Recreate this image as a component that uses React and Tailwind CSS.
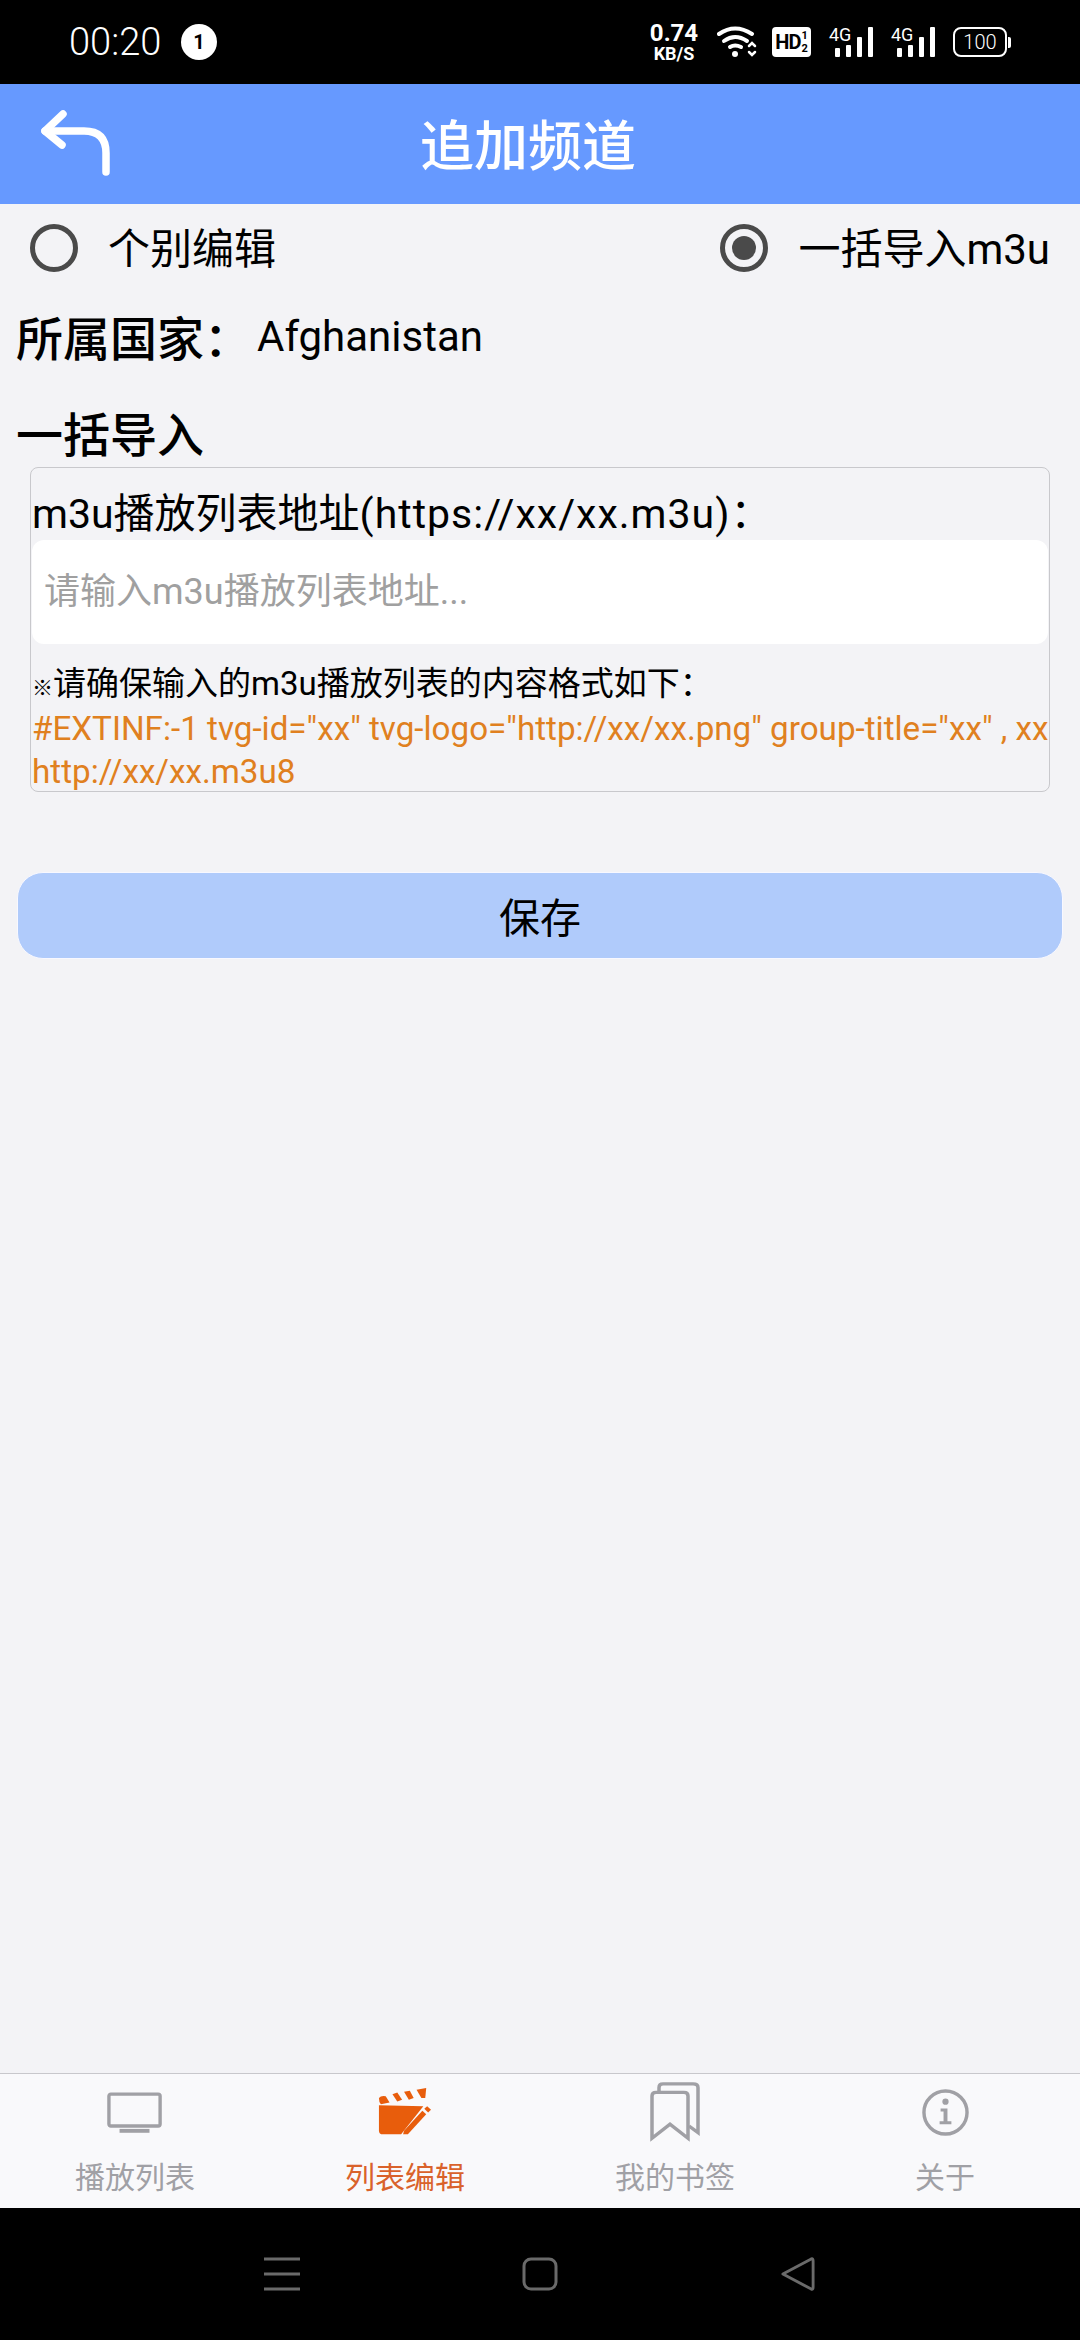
import React from 'react';

const BODY_FONT = 'font-["Roboto","Noto_Sans_CJK_SC",sans-serif]';

function Signal() {
  return (
    <div className="relative w-[44px] h-[30px]">
      <span className="absolute left-0 top-[-1px] text-[18px] leading-[18px] text-white">4G</span>
      <svg width="44" height="30" viewBox="0 0 44 30" className="absolute left-0 top-0" fill="#fff">
        <rect x="6" y="21" width="5" height="9" rx="1" />
        <rect x="17" y="18" width="5" height="12" rx="1" />
        <rect x="28" y="10" width="5" height="20" rx="1" />
        <rect x="39" y="0" width="5" height="30" rx="1" />
      </svg>
    </div>
  );
}

function StatusBar() {
  return (
    <div className="h-[84px] bg-black flex items-center pl-[69px] shrink-0 text-white">
      <span className="w-[94px] text-[38px] leading-[44px] font-light">00:20</span>
      <span className="ml-[18px] w-[36px] h-[36px] rounded-full bg-white text-black flex items-center justify-center text-[20px] font-bold">1</span>
      <div className="ml-[432px] w-[50px] flex flex-col items-center">
        <span className="text-[24px] leading-[24px] font-bold">0.74</span>
        <span className="text-[18px] leading-[18px] font-bold">KB/S</span>
      </div>
      <svg width="40" height="32" viewBox="0 0 40 32" className="ml-[18px]" fill="none" stroke="#fff" strokeWidth="4" strokeLinecap="round">
        <path d="M2 8 Q18 -3 35 8" />
        <path d="M7 15 Q18 7 30 15" />
        <path d="M13 21 Q18 18 24 21" />
        <circle cx="18" cy="28" r="3" fill="#fff" stroke="none" />
        <path d="M32 20 l3 -3 l3 3 M32 26 l3 3 l3 -3" strokeWidth="2.5" />
      </svg>
      <div className="ml-[15px] w-[39px] h-[30px] rounded-[4px] bg-white text-black flex items-center justify-center gap-[1px] font-bold">
        <span className="text-[20px] leading-[30px] tracking-[-1px]">HD</span>
        <span className="flex flex-col text-[11px] leading-[13px]"><span>1</span><span>2</span></span>
      </div>
      <div className="ml-[18px] flex gap-[18px]">
        <Signal />
        <Signal />
      </div>
      <div className="ml-[18px] flex items-center">
        <div className="w-[54px] h-[30px] rounded-[8px] border-[2.5px] border-white flex items-center justify-center text-[20px] leading-[24px] font-light">100</div>
        <span className="ml-[1px] w-[3px] h-[11px] bg-white rounded-r-[2px]"></span>
      </div>
    </div>
  );
}

function Header() {
  return (
    <div className="h-[120px] bg-[#6699ff] flex items-center pl-[40px] shrink-0">
      <svg width="72" height="68" viewBox="0 0 72 68" fill="none" stroke="#fff" strokeWidth="7.5" strokeLinecap="round" strokeLinejoin="round">
        <path d="M23 4 L5 21 L22 35" />
        <path d="M5 21 H44 Q66 21 66 43 V62" />
      </svg>
      <span className="ml-[308px] mt-[8px] text-[54px] leading-[64px] font-medium text-white">追加频道</span>
    </div>
  );
}

function Radio({ checked, label }) {
  return (
    <div className="flex items-center">
      <span className="w-[48px] h-[48px] rounded-full border-[5px] border-[#4a4a4a] flex items-center justify-center">
        {checked && <span className="w-[24px] h-[24px] rounded-full bg-[#4a4a4a]"></span>}
      </span>
      <span className="ml-[30px] mt-[3px] text-[42px] leading-[50px] text-black">{label}</span>
    </div>
  );
}

function TabIcon({ name }) {
  if (name === 'tv') {
    return (
      <svg width="56" height="41" viewBox="0 0 58 42" fill="none">
        <rect x="2" y="2" width="53" height="33" rx="2" stroke="#a0a0a5" strokeWidth="3.5" />
        <rect x="13" y="38" width="31" height="4" fill="#a0a0a5" />
      </svg>
    );
  }
  if (name === 'clap') {
    return (
      <svg width="54" height="49" viewBox="0 0 56 54" preserveAspectRatio="none" fill="#e85d0c">
        <path d="M1 19 L47 20 L24 51 H5 Q1 51 1 47 Z" />
        <path d="M1 11 Q3 8 8 9 L12 16 L3 18 Q1 16 1 11 Z" />
        <path d="M15 7 L20 5 L25 13 L20 15 Z" />
        <path d="M27 4 L33 3 L37 11 L32 13 Z" />
        <path d="M40 2 L50 0 L49 11 L45 11 Z" />
        <path d="M31 51 L26 51 L27 47 L46 25 L50 29 Z" />
        <path d="M48 23 L51 20 L55 24 L52 27 Z" />
      </svg>
    );
  }
  if (name === 'bookmark') {
    return (
      <svg width="50" height="60" viewBox="0 0 50 64" preserveAspectRatio="none" fill="none" stroke="#a0a0a5" strokeWidth="3.5">
        <path d="M9 10 V6 Q9 2 13 2 H43 Q48 2 48 6 V54 L39 47" />
        <path d="M2 60 V15 Q2 11 6 11 H34 Q38 11 38 15 V60 L20 45 Z" />
      </svg>
    );
  }
  return (
    <svg width="47" height="47" viewBox="0 0 48 48" fill="none">
      <circle cx="24" cy="24" r="22" stroke="#a0a0a5" strokeWidth="3.5" />
      <circle cx="24" cy="13" r="3.2" fill="#a0a0a5" />
      <path d="M19 20 H26 V33 H30 V36 H18 V33 H22 V23 H19 Z" fill="#a0a0a5" />
    </svg>
  );
}

function Tab({ icon, label, active }) {
  return (
    <div className="flex-1 flex flex-col items-center">
      <div className="h-[76px] flex items-center justify-center">
        <TabIcon name={icon} />
      </div>
      <span className={`mt-[6px] text-[30px] leading-[44px] ${active ? 'text-[#d9622b]' : 'text-[#a0a0a5]'}`}>{label}</span>
    </div>
  );
}

export default function App() {
  return (
    <div className={`w-[1080px] h-[2340px] flex flex-col bg-[#f3f3f6] ${BODY_FONT}`}>
      <StatusBar />
      <Header />

      <div className="flex-1 flex flex-col">
        <div className="h-[88px] flex items-center justify-between px-[30px]">
          <Radio label="个别编辑" />
          <Radio checked label="一括导入m3u" />
        </div>

        <div className="h-[90px] flex items-center pl-[16px] text-black">
          <span className="mt-[6px] text-[47px] leading-[56px] font-medium">所属国家：</span>
          <span className="ml-[6px] text-[42px] leading-[50px]">Afghanistan</span>
        </div>

        <div className="mt-[27px] h-[58px] pl-[16px] text-[47px] leading-[54px] font-medium text-black">一括导入</div>

        {/* Import box */}
        <div className="ml-[30px] w-[1020px] h-[325px] border border-[#c8c8cc] rounded-[8px] overflow-hidden">
          <div className="h-[72px] flex items-end pl-[1px] text-[41px] leading-[52px] text-black whitespace-nowrap">
            <span>m3u播放列表地址<span className="tracking-[1px]">(https://xx/xx.m3u)</span>：</span>
          </div>
          <div className="h-[104px] ml-[1px] mr-[1px] bg-white rounded-[12px] flex items-center pl-[12px] text-[36px] text-[#a0a0a0]">请输入m3u播放列表地址...</div>
          <div className="pl-[1px] pt-[21px] whitespace-nowrap">
            <div className="text-[33px] leading-[38px] text-black"><span className="text-[21px]">※</span>请确保输入的m3u播放列表的内容格式如下：</div>
            <div className="text-[33.2px] leading-[43px] text-[#e08020]">#EXTINF:-1 tvg-id="xx" tvg-logo="http://xx/xx.png" group-title="xx" , xx</div>
            <div className="text-[33.2px] leading-[43px] text-[#e08020]">http://xx/xx.m3u8</div>
          </div>
        </div>

        <button className="ml-[17px] mt-[80px] w-[1046px] h-[87px] pt-[8px] rounded-[26px] bg-[#b0cbfb] border border-[#f8f8ff] text-[41px] text-black">保存</button>
      </div>

      {/* Tab bar */}
      <div className="h-[135px] shrink-0 border-t border-[#c8c8cc] bg-[#f9f9fb] flex">
        <Tab icon="tv" label="播放列表" />
        <Tab icon="clap" label="列表编辑" active />
        <Tab icon="bookmark" label="我的书签" />
        <Tab icon="info" label="关于" />
      </div>

      {/* System nav */}
      <div className="h-[132px] shrink-0 bg-black flex items-start pt-[49px] pl-[264px]">
        <svg width="36" height="34" viewBox="0 0 36 34" stroke="#6a6a6a" strokeWidth="3">
          <path d="M0 2 H36 M0 17 H36 M0 32 H36" />
        </svg>
        <svg width="36" height="34" viewBox="0 0 36 34" fill="none" stroke="#6a6a6a" strokeWidth="3" className="ml-[222px]">
          <rect x="2" y="2" width="32" height="30" rx="7" />
        </svg>
        <svg width="36" height="34" viewBox="0 0 36 36" fill="none" stroke="#6a6a6a" strokeWidth="3" strokeLinejoin="round" className="ml-[222px]">
          <path d="M2 18 L32 2 Q34 1 34 4 V32 Q34 35 32 34 Z" />
        </svg>
      </div>
    </div>
  );
}
